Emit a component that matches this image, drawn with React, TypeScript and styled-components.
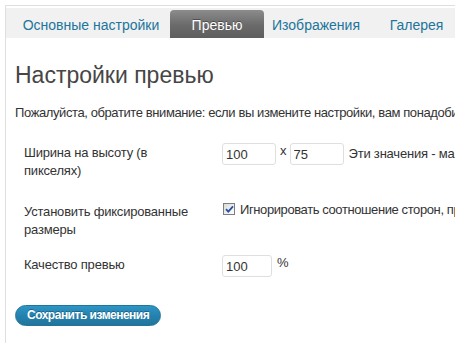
import React from "react";
import styled, { createGlobalStyle } from "styled-components";

const Global = createGlobalStyle`
  html, body {
    margin: 0;
    padding: 0;
    background: #fff;
    overflow: hidden;
  }
  body {
    font-family: "Liberation Sans", Arial, sans-serif;
    font-size: 13px;
    color: #333;
  }
`;

const Frame = styled.div`
  margin: 5px 0 0 5px;
  border-top: 1px solid #dfdfdf;
  border-left: 1px solid #dfdfdf;
  min-height: 338px;
  box-sizing: border-box;
  overflow: hidden;
`;

const TabBar = styled.nav`
  margin-top: 2px;
  height: 30px;
  background: #f1f1f1;
  display: flex;
  align-items: flex-end;
  padding-left: 6px;
  overflow: hidden;
`;

const Tab = styled.a<{ $active?: boolean; $w: number }>`
  flex-shrink: 0;
  width: ${(p) => p.$w}px;
  height: 28px;
  box-sizing: border-box;
  padding-top: 1px;
  display: flex;
  align-items: center;
  justify-content: center;
  font-size: 14px;
  white-space: nowrap;
  text-decoration: none;
  cursor: pointer;
  color: ${(p) => (p.$active ? "#fff" : "#21759b")};
  border-radius: ${(p) => (p.$active ? "4px 4px 0 0" : "0")};
  background: ${(p) =>
    p.$active ? "linear-gradient(to bottom, #8c8c8c 0%, #6a6a6a 55%, #5e5e5e 100%)" : "transparent"};
  text-shadow: ${(p) => (p.$active ? "0 -1px 0 rgba(0,0,0,0.35)" : "none")};
`;

const Content = styled.div`
  padding-left: 9px;
`;

const Title = styled.h2`
  margin: 23px 0 0;
  font-size: 23px;
  line-height: 28px;
  font-weight: normal;
  color: #464646;
`;

const Notice = styled.p`
  margin: 15px 0 0;
  line-height: 18px;
  white-space: nowrap;
  letter-spacing: -0.4px;
  color: #333;
`;

const Form = styled.div`
  margin-top: 21px;
  padding-left: 9px;
  display: flex;
  flex-direction: column;
`;

const FieldRow = styled.div<{ $space: number }>`
  display: grid;
  grid-template-columns: 180px 1fr;
  column-gap: 18px;
  align-items: start;
  margin-bottom: ${(p) => p.$space}px;
`;

const Label = styled.div`
  padding-top: 1px;
  line-height: 18px;
  letter-spacing: -0.2px;
  color: #333;
`;

const Controls = styled.div<{ $top?: number }>`
  display: flex;
  align-items: flex-start;
  white-space: nowrap;
  line-height: 15px;
  padding-top: ${(p) => p.$top ?? 0}px;
`;

const NumInput = styled.input<{ $w: number }>`
  box-sizing: border-box;
  width: ${(p) => p.$w}px;
  height: 22px;
  border: 1px solid #dfdfdf;
  border-radius: 3px;
  padding: 0 3px;
  margin: 0;
  font-family: "Liberation Sans", Arial, sans-serif;
  font-size: 13px;
  color: #333;
  background: #fff;
  outline: none;
  flex-shrink: 0;
`;

const Sep = styled.span<{ $l: number; $r: number }>`
  margin: 0 ${(p) => p.$r}px 0 ${(p) => p.$l}px;
  font-size: 13px;
  color: #333;
`;

const Hint = styled.span`
  margin-left: 5px;
  padding-top: 3px;
  letter-spacing: -0.2px;
  color: #333;
`;

const CheckBox = styled.span`
  flex-shrink: 0;
  box-sizing: border-box;
  width: 12px;
  height: 12px;
  margin: 1px 0 0 1px;
  border: 1px solid #7a7f87;
  background: linear-gradient(135deg, #dcdcd5 0%, #f4f4f2 70%, #ffffff 100%);
  display: flex;
  align-items: center;
  justify-content: center;
`;

const CheckText = styled.span`
  margin-left: 5px;
  letter-spacing: -0.4px;
  color: #333;
`;

const SaveButton = styled.button`
  margin-top: 28px;
  box-sizing: border-box;
  height: 21px;
  padding: 0 11px;
  border: 1px solid #21759b;
  border-radius: 11px;
  background: linear-gradient(to bottom, #2e95c4 0%, #2482b0 50%, #21759b 100%);
  color: #fff;
  font-family: "Liberation Sans", Arial, sans-serif;
  font-size: 12px;
  font-weight: bold;
  letter-spacing: -0.5px;
  line-height: 19px;
  text-shadow: 0 -1px 0 rgba(0, 0, 0, 0.3);
  cursor: pointer;
`;

export default function App() {
  return (
    <>
      <Global />
      <Frame>
        <TabBar>
          <Tab $w={158}>Основные настройки</Tab>
          <Tab $w={94} $active>
            Превью
          </Tab>
          <Tab $w={104}>Изображения</Tab>
          <Tab $w={97}>Галерея</Tab>
        </TabBar>
        <Content>
          <Title>Настройки превью</Title>
          <Notice>
            Пожалуйста, обратите внимание: если вы измените настройки, вам понадобится перегенерировать превью.
          </Notice>
          <Form>
            <FieldRow $space={22}>
              <Label>Ширина на высоту (в пикселях)</Label>
              <Controls>
                <NumInput $w={54} defaultValue="100" />
                <Sep $l={4} $r={3}>x</Sep>
                <NumInput $w={54} defaultValue="75" />
                <Hint>Эти значения - максимальные значения для превью</Hint>
              </Controls>
            </FieldRow>
            <FieldRow $space={16}>
              <Label>Установить фиксированные размеры</Label>
              <Controls>
                <CheckBox>
                  <svg width="9" height="9" viewBox="0 0 9 9">
                    <path
                      d="M1 4.2 L3.3 6.6 L8 1.4"
                      fill="none"
                      stroke="#2451a8"
                      strokeWidth="1.8"
                    />
                  </svg>
                </CheckBox>
                <CheckText>Игнорировать соотношение сторон, превью будет обрезано</CheckText>
              </Controls>
            </FieldRow>
            <FieldRow $space={0}>
              <Label>Качество превью</Label>
              <Controls>
                <NumInput $w={50} defaultValue="100" />
                <Sep $l={5} $r={0}>%</Sep>
              </Controls>
            </FieldRow>
          </Form>
          <div>
            <SaveButton>Сохранить изменения</SaveButton>
          </div>
        </Content>
      </Frame>
    </>
  );
}
